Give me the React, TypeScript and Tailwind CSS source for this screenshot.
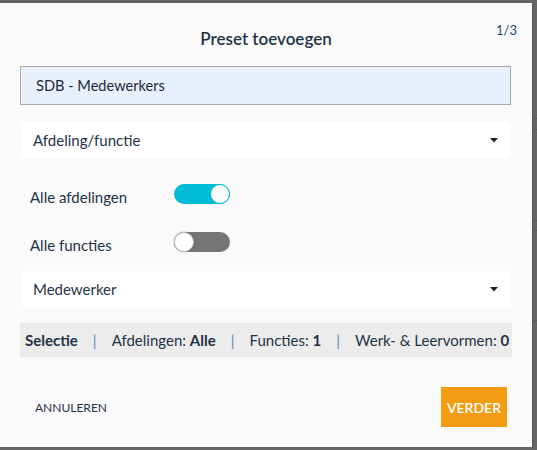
import React from "react";

const Caret = () => (
  <svg width="8" height="5" viewBox="0 0 8 5" className="mr-[13px]">
    <path d="M0 0 L8 0 L4 4.5 Z" fill="#222" />
  </svg>
);

const Select = ({ label, className = "" }: { label: string; className?: string }) => (
  <div className={`flex h-[36px] w-[490px] items-center justify-between rounded-[4px] bg-white pl-[12px] ${className}`}>
    <span className="text-[15px] text-[#1f3346]">{label}</span>
    <Caret />
  </div>
);

const Toggle = ({ on }: { on: boolean }) =>
  on ? (
    <div className="flex h-[20px] w-[56px] items-center justify-end rounded-full bg-[#00bcd4]">
      <div className="h-[20px] w-[20px] rounded-full border border-[#00bcd4] bg-white" />
    </div>
  ) : (
    <div className="flex h-[20px] w-[56px] items-center justify-start rounded-full bg-[#757575]">
      <div className="h-[20px] w-[20px] rounded-full border border-[#c8c8c8] bg-white shadow-[0_0_2px_rgba(0,0,0,0.4)]" />
    </div>
  );

const Sep = () => <span className="px-[15px] text-[#5b8ab5]">|</span>;

export default function App() {
  return (
    <div
      className="flex h-[450px] w-[537px] flex-col bg-[#646464]"
      style={{ fontFamily: "Lato, 'Liberation Sans', sans-serif" }}
    >
      <div className="h-[3px]" />
      <div className="flex">
        <div className="relative flex h-[444px] w-[532px] flex-col bg-[#fafafa] px-[20px] text-[#1f3346]">
          <div className="absolute right-[15px] top-[18px] text-[13px] leading-[18px] text-[#2a4a6a]">1/3</div>
          <h2 className="mt-[24px] h-[24px] text-center text-[17px] font-semibold leading-[24px] text-[#1d3347]">
            Preset toevoegen
          </h2>
          <div className="mt-[15px] flex h-[39px] w-[491px] items-center border border-[#a9a9a9] bg-[#e8f0fe] pl-[15px] text-[14.6px] text-[#1c2a38]">
            SDB - Medewerkers
          </div>
          <Select label="Afdeling/functie" className="ml-[1px] mt-[17px]" />
          <div className="mt-[26px] flex h-[20px] items-center">
            <span className="ml-[10px] mt-[6px] w-[144px] text-[15px]">Alle afdelingen</span>
            <Toggle on />
          </div>
          <div className="mt-[28px] flex h-[20px] items-center">
            <span className="ml-[10px] mt-[6px] w-[144px] text-[15px]">Alle functies</span>
            <Toggle on={false} />
          </div>
          <Select label="Medewerker" className="ml-[1px] mt-[19px]" />
          <div className="mt-[16px] flex h-[34px] w-[492px] items-center whitespace-nowrap bg-[#ececec] pl-[5px] text-[15px] text-[#1f3346]">
            <span className="font-bold">Selectie</span>
            <Sep />
            <span>
              Afdelingen: <span className="font-bold">Alle</span>
            </span>
            <Sep />
            <span>
              Functies: <span className="font-bold">1</span>
            </span>
            <Sep />
            <span>
              Werk- &amp; Leervormen: <span className="font-bold">0</span>
            </span>
          </div>
          <div className="mt-[30px] flex items-center justify-between">
            <span className="ml-[15px] mt-[2px] text-[12px] text-[#1f3346]">ANNULEREN</span>
            <div className="mr-[5px] flex h-[40px] w-[66px] items-center justify-center bg-[#f39c12] text-[14px] font-semibold text-white">
              VERDER
            </div>
          </div>
        </div>
        <div className="flex w-[5px] flex-col border-l border-[#555]">
          <div className="h-[115px]" />
          <div className="h-px bg-[#555]" />
          <div className="h-[10px]" />
          <div className="h-px bg-[#555]" />
          <div className="h-[90px]" />
          <div className="h-px bg-[#555]" />
          <div className="h-[9px]" />
          <div className="h-px bg-[#555]" />
          <div className="h-[89px]" />
          <div className="h-px bg-[#555]" />
        </div>
      </div>
    </div>
  );
}
